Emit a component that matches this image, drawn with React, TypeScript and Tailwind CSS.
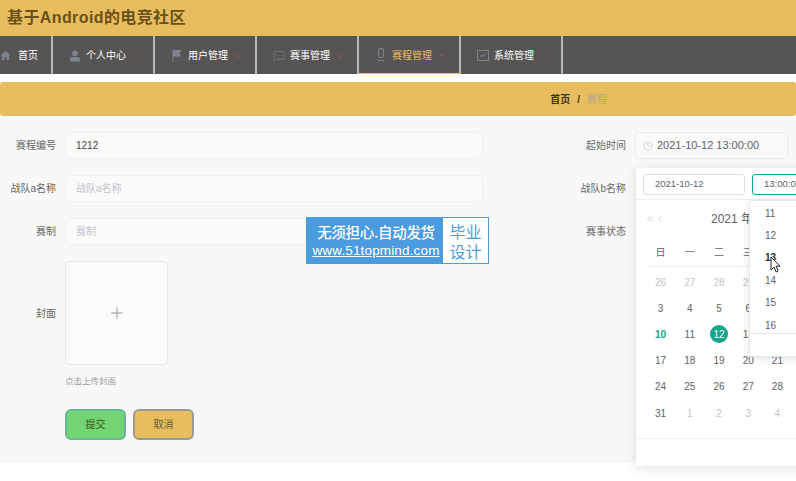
import React from "react";
import { ChevronDown, ChevronsLeft, ChevronLeft, Clock, Plus, MessageSquareMore } from "lucide-react";

const font = { fontFamily: '"Liberation Sans", "Noto Sans CJK SC", sans-serif' };

const HomeIcon = () => (
  <svg width="11" height="11" viewBox="0 0 12 12" fill="#7d8490"><path d="M6 1 0.5 6H2v5h3V7.5h2V11h3V6h1.5z" /></svg>
);
const UserIcon = () => (
  <svg width="12" height="12" viewBox="0 0 12 12" fill="#7d8490"><circle cx="6" cy="3.2" r="2.8" /><path d="M1 11.5V9.2C1 7.8 2.5 7 4 7h4c1.500 0 3 .8 3 2.200v2.300z" /></svg>
);
const FlagIcon = () => (
  <svg width="12" height="12" viewBox="0 0 12 12" fill="#7d8490"><path d="M1.500 0h9L8.500 3l2 3.500H2.500V12h-1z" /></svg>
);
const MicIcon = () => (
  <svg width="12" height="14" viewBox="0 0 12 14" fill="none" stroke="#7d8490" strokeWidth="1"><rect x="3.500" y="0.500" width="5" height="9" rx="1.500" /><path d="M2.500 12.500h7" /></svg>
);
const BoardIcon = () => (
  <svg width="12" height="11" viewBox="0 0 12 11" fill="none" stroke="#7d8490" strokeWidth="1"><rect x="0.500" y="0.500" width="11" height="10" /><path d="M3 7l2-2 1.500 1.500L9 3.500" /></svg>
);

const navItems = [
  { label: "个人中心", icon: <UserIcon /> },
  { label: "用户管理", icon: <FlagIcon /> },
  { label: "赛事管理", icon: <MessageSquareMore size={12} color="#7d8490" strokeWidth={1.2} /> },
  { label: "赛程管理", icon: <MicIcon />, active: true },
  { label: "系统管理", icon: <BoardIcon /> },
];

function Field({ label, value, placeholder }: { label: string; value?: string; placeholder?: string }) {
  return (
    <div className="flex items-center h-[27px]">
      <span className="w-[56px] text-right text-[10px] text-[#666] whitespace-nowrap shrink-0">{label}</span>
      <div className={`ml-[9px] w-[418px] h-full rounded-[4px] border border-[#f0f0f0] bg-[#fafafa] px-[10px] flex items-center text-[10px] ${value ? "text-[#444]" : "text-[#c0c4cc]"}`}>
        {value ?? placeholder}
      </div>
    </div>
  );
}

function RightLabel({ text }: { text: string }) {
  return <span className="w-[56px] text-right text-[10px] text-[#666] whitespace-nowrap">{text}</span>;
}

const weeks = [
  ["26", "27", "28", "29", "30"],
  ["3", "4", "5", "6", "7"],
  ["10", "11", "12", "13", "14"],
  ["17", "18", "19", "20", "21"],
  ["24", "25", "26", "27", "28"],
  ["31", "1", "2", "3", "4"],
];

function dayClass(r: number, c: number) {
  if (r === 0 || (r === 5 && c > 0)) return "text-[#c0c4cc]";
  if (r === 2 && c === 0) return "text-[#14a58c] font-bold";
  return "text-[#606266]";
}

function DatePopup() {
  return (
    <div className="absolute left-[636px] top-[168px] w-[322px] h-[298px] bg-white rounded-[3px] shadow-[0_2px_12px_rgba(0,0,0,0.12)] flex flex-col text-[10px] text-[#606266]">
      <div className="flex gap-[7px] h-[32px] px-[7px] pt-[6px] border-b border-[#eeeeee] text-[9.500px]">
        <div className="w-[102px] h-[21px] rounded-[3px] border border-[#dcdfe6] pl-[11px] flex items-center">2021-10-12</div>
        <div className="w-[102px] h-[21px] rounded-[3px] border border-[#14a58c] pl-[11px] flex items-center">13:00:00</div>
      </div>
      <div className="h-[38px] flex items-center pl-[9px] text-[#999] relative">
        <ChevronsLeft size={10} strokeWidth={1.2} />
        <ChevronLeft size={10} strokeWidth={1.2} />
        <span className="ml-[46px] text-[12px] text-[#606266] whitespace-nowrap">2021 年 10 月</span>
      </div>
      <div className="mx-[10px] w-[146px] grid grid-cols-5 h-[29px] border-b border-[#ebeef5] items-center">
        {["日", "一", "二", "三", "四"].map((d) => (
          <span key={d} className="w-[29px] text-center">{d}</span>
        ))}
      </div>
      <div className="mx-[10px] w-[146px] grid grid-cols-5 auto-rows-[26.2px] pt-[2px]">
        {weeks.flatMap((w, r) =>
          w.map((d, c) =>
            r === 2 && c === 2 ? (
              <span key={`${r}-${c}`} className="flex items-center justify-center">
                <span className="w-[18px] h-[18px] rounded-full bg-[#14a58c] text-white flex items-center justify-center">{d}</span>
              </span>
            ) : (
              <span key={`${r}-${c}`} className={`flex items-center justify-center ${dayClass(r, c)}`}>{d}</span>
            )
          )
        )}
      </div>
      <div className="mt-auto h-[28px] border-t border-[#eeeeee]" />

      <div className="absolute left-[113px] top-[32px] w-[120px] h-[157px] bg-white border border-[#e4e7ed] rounded-[2px] shadow-[0_2px_8px_rgba(0,0,0,0.1)] flex flex-col">
        <div className="h-[133px] flex flex-col pt-[1px] border-b border-[#e4e7ed] overflow-hidden">
          {["11", "12", "13", "14", "15", "16"].map((h) => (
            <span key={h} className={`h-[22.400px] shrink-0 pl-[15px] flex items-center ${h === "13" ? "text-[#303133] font-bold" : ""}`}>{h}</span>
          ))}
        </div>
      </div>
    </div>
  );
}

function Watermark() {
  return (
    <div className="absolute left-[306px] top-[217px] w-[183px] h-[47px] bg-[#4a9be0] flex items-center pl-[3px] pr-[1px]">
      <div className="flex-1 flex flex-col items-center text-white font-medium">
        <span className="text-[14.500px] leading-[20px] whitespace-nowrap tracking-[-0.300px]" style={{ fontFamily: '"Noto Sans CJK SC", sans-serif' }}>无须担心.自动发货</span>
        <span className="text-[13.500px] leading-[17px] underline whitespace-nowrap tracking-[0.150px]">www.51topmind.com</span>
      </div>
      <div className="w-[45px] h-[45px] bg-white text-[#4a9be0] text-[16px] leading-[20px] text-center flex flex-col justify-center" style={{ fontFamily: '"Noto Sans CJK SC", sans-serif' }}>
        <span>毕业</span>
        <span>设计</span>
      </div>
    </div>
  );
}

export default function App() {
  return (
    <div className="relative w-[796px] h-[481px] overflow-hidden bg-white" style={font}>
      <header className="h-[36px] bg-[#e8bd60] flex items-center pl-[7px] text-[16px] font-bold text-[#6b5118] tracking-[0.400px]">基于Android的电竞社区</header>

      <nav className="h-[38px] bg-[#575553] flex text-[10px] text-white">
        <div className="w-[53px] flex items-center gap-[7px] border-r-[2px] border-[#b8b8b8] shrink-0 pt-[1px]">
          <HomeIcon />
          <span className="whitespace-nowrap">首页</span>
        </div>
        {navItems.map((n) => (
          <div key={n.label} className={`w-[102px] flex items-center pl-[16px] gap-[5px] border-r-[2px] border-[#b8b8b8] shrink-0 pt-[1px] ${n.active ? "text-[#e8bd60] border-b border-b-[#e8bd60]" : ""}`}>
            {n.icon}
            <span className="whitespace-nowrap">{n.label}</span>
            <ChevronDown size={10} color="#9a5a5a" strokeWidth={2} />
          </div>
        ))}
      </nav>

      <div className="h-[8px] bg-white" />

      <div className="h-[34px] bg-[#e8bd60] rounded-[3px] flex items-center justify-end pr-[189px] text-[10px]">
        <span className="font-bold text-[#3f3420]">首页</span>
        <span className="mx-[7px] font-bold text-[#3f3420]">/</span>
        <span className="text-[#b3a88c]">赛程</span>
      </div>

      <main className="h-[347px] bg-[#f8f8f8] pt-[16px] flex">
        <div className="w-[570px] flex flex-col gap-[16px] shrink-0">
          <Field label="赛程编号" value="1212" />
          <Field label="战队a名称" placeholder="战队a名称" />
          <Field label="赛制" placeholder="赛制" />
          <div className="flex items-center">
            <span className="w-[56px] text-right text-[10px] text-[#666]">封面</span>
            <div className="ml-[9px] w-[103px] h-[104px] rounded-[4px] border border-[#e6e6e6] bg-[#fbfbfb] flex items-center justify-center">
              <Plus size={18} color="#8c8c8c" strokeWidth={1.2} />
            </div>
          </div>
          <div className="-mt-[6px] ml-[65px] text-[8.500px] text-[#9a9a9a]">点击上传封面</div>
          <div className="ml-[65px] mt-[5px] flex gap-[7px]">
            <button className="w-[61px] h-[31px] rounded-[6px] border-2 border-[#67b49a] bg-[#72d472] text-[10px] text-[#3f5a20]">提交</button>
            <button className="w-[61px] h-[31px] rounded-[6px] border-2 border-[#9a9a9a] bg-[#e8bd60] text-[10px] text-[#6e5a30]">取消</button>
          </div>
        </div>
        <div className="flex flex-col gap-[16px]">
          <div className="flex items-center h-[27px]">
            <RightLabel text="起始时间" />
            <div className="ml-[9px] w-[153px] h-full rounded-[3px] border border-[#ececec] bg-[#fafafa] flex items-center pl-[7px] gap-[4px] text-[11px] text-[#606266] whitespace-nowrap">
              <Clock size={10} color="#c0c4cc" strokeWidth={1.5} />
              2021-10-12 13:00:00
            </div>
          </div>
          <div className="flex items-center h-[27px]"><RightLabel text="战队b名称" /></div>
          <div className="flex items-center h-[27px]"><RightLabel text="赛事状态" /></div>
        </div>
      </main>

      <DatePopup />
      <Watermark />

      <svg className="absolute left-[770px] top-[256px]" width="12" height="18" viewBox="0 0 12 18">
        <path d="M1 1v13l3-3 2.200 5 2-1-2.200-4.800h4z" fill="#fff" stroke="#222" strokeWidth="1" />
      </svg>
    </div>
  );
}
